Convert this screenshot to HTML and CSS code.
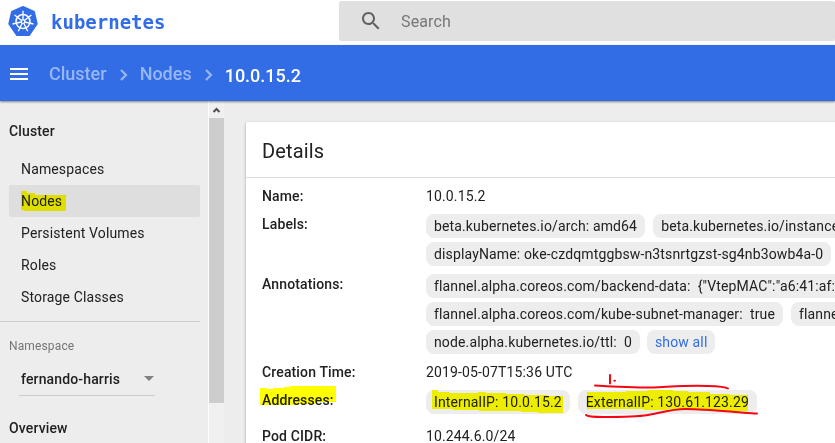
FILE: index.html
```html
<!DOCTYPE html>
<html lang="en">
<head>
<meta charset="utf-8">
<title>Kubernetes Dashboard</title>
<link rel="stylesheet" href="styles.css">
</head>
<body>
<header class="top">
  <svg class="logo" width="30" height="30" viewBox="0 0 30 30">
    <path d="M15 .8 26.2 5.800 29 17.800 21.300 29.200H8.700L1 17.800 3.800 5.800Z" fill="#326de6" stroke="#326de6" stroke-width="1.500" stroke-linejoin="round"/>
    <g fill="none" stroke="#fff" stroke-width="1.500">
      <circle cx="15" cy="15.600" r="7"/>
      <circle cx="15" cy="15.600" r="1.800" stroke-width="1.200"/>
      <path stroke-width="1.300" d="M15 13.800V4.800M16.400 14.500 23.400 8.900M16.700 16 25.500 18M15.800 17.200 19.700 25.300M14.200 17.200 10.300 25.300M13.300 16 4.500 18M13.600 14.500 6.600 8.900"/>
    </g>
  </svg>
  <span class="wordmark">kubernetes</span>
  <div class="search">
    <svg width="24" height="24" viewBox="0 0 24 24"><path fill="#616161" d="M15.500 14h-.79l-.28-.27C15.410 12.590 16 11.110 16 9.500 16 5.910 13.090 3 9.500 3S3 5.910 3 9.500 5.910 16 9.500 16c1.610 0 3.090-.59 4.230-1.570l.27.28v.79l5 4.990L20.490 19l-4.990-5zm-6 0C7.010 14 5 11.990 5 9.500S7.010 5 9.500 5 14 7.010 14 9.500 11.990 14 9.500 14z"/></svg>
    <span>Search</span>
  </div>
</header>
<nav class="bar">
  <svg class="menu" width="18" height="12" viewBox="0 0 18 12"><path fill="#fff" d="M0 0h18v2H0zM0 5h18v2H0zM0 10h18v2H0z"/></svg>
  <span class="crumb">Cluster</span>
  <svg class="chev" width="8" height="12" viewBox="0 0 8 12"><path d="M1 1l5 5-5 5" fill="none" stroke="#98b6f2" stroke-width="2.200"/></svg>
  <span class="crumb">Nodes</span>
  <svg class="chev" width="8" height="12" viewBox="0 0 8 12"><path d="M1 1l5 5-5 5" fill="none" stroke="#98b6f2" stroke-width="2.200"/></svg>
  <span class="crumb current">10.0.15.2</span>
</nav>
<div class="body">
  <aside class="side">
    <div class="group">Cluster</div>
    <a class="item">Namespaces</a>
    <a class="item active">Nodes</a>
    <a class="item">Persistent Volumes</a>
    <a class="item">Roles</a>
    <a class="item">Storage Classes</a>
    <div class="rule"></div>
    <div class="label">Namespace</div>
    <div class="select"><span>fernando-harris</span><i class="arrow"></i></div>
    <div class="group overview">Overview</div>
  </aside>
  <div class="scroll">
    <svg width="15" height="17" viewBox="0 0 15 17"><path d="M4.500 11 7.500 8l3 3" fill="none" stroke="#505050" stroke-width="2"/></svg>
    <div class="thumb"></div>
  </div>
  <main class="content">
    <section class="card">
      <h2>Details</h2>
      <dl>
        <dt>Name:</dt><dd>10.0.15.2</dd>
        <dt>Labels:</dt>
        <dd class="chips">
          <div><span class="chip">beta.kubernetes.io/arch: amd64</span><span class="chip">beta.kubernetes.io/instance</span></div>
          <div><span class="chip">displayName: oke-czdqmtggbsw-n3tsnrtgzst-sg4nb3owb4a-0</span></div>
        </dd>
        <dt>Annotations:</dt>
        <dd class="chips">
          <div><span class="chip">flannel.alpha.coreos.com/backend-data: &nbsp;{"VtepMAC":"a6:41:af:</span></div>
          <div><span class="chip">flannel.alpha.coreos.com/kube-subnet-manager: &nbsp;true</span><span class="chip">flannel</span></div>
          <div class="tight"><span class="chip">node.alpha.kubernetes.io/ttl: &nbsp;0</span><span class="chip link">show all</span></div>
        </dd>
        <dt>Creation Time:</dt><dd>2019-05-07T15:36 UTC</dd>
        <dt>Addresses:</dt>
        <dd class="chips addresses">
          <div><span class="chip">InternalIP: 10.0.15.2</span><span class="chip">ExternalIP: 130.61.123.29</span></div>
        </dd>
        <dt>Pod CIDR:</dt><dd>10.244.6.0/24</dd>
      </dl>
    </section>
  </main>
</div>
<svg class="marker" width="835" height="443" viewBox="0 0 835 443">
  <g fill="#ff0" shape-rendering="crispEdges">
    <path d="M21 191h6v2h8v2h31v16H24v-1h-3z"/>
    <path d="M260 388h7v1h6v-1h11v-1h6v-1h46v16h-21v2h-17v1h-38z"/>
    <path d="M432 390h6v2h11v1h29v-1h8v1h20v1h18v1h23v1h16v17h-25v-1h-17v-1h-42v-1h-26v-1h-21z"/>
    <path d="M587 392h39v-1h21v-1h26v1h15v1h22v2h20v1h18v16h-23v-1h-19v-1h-39v1h-23v-1h-57z"/>
  </g>
</svg>
<svg class="pen" width="835" height="443" viewBox="0 0 835 443">
  <path d="M610 375v8.500M614.300 380.700h.6M595 385.500c17 1 39 2 58 2 21-1 38-2.500 54-1.500 10 .3 18 .5 21 2.500M586 415c2 2 9 2 17 2 17 0 32 0 45-2 13-2 22-6 38-6s37 2 49 3c8 .5 15 1.500 22 1.500" fill="none" stroke="#f50613" stroke-width="2" stroke-linecap="round"/>
</svg>
</body>
</html>
```

FILE: styles.css
```css
* { box-sizing: border-box; }
body {
  margin: 0;
  width: 835px;
  height: 443px;
  overflow: hidden;
  display: flex;
  flex-direction: column;
  background: #ededed;
  color: #212121;
  font: 14px/20px Roboto, sans-serif;
  letter-spacing: .01em;
}
svg { flex: none; }
.top { height: 45px; flex: none; display: flex; background: #fff; }
.logo { margin: 6px 0 0 8px; }
.wordmark {
  width: 301px;
  flex: none;
  padding: 11px 0 0 13px;
  font: bold 19px/22px "DejaVu Sans Mono", monospace;
  letter-spacing: 0;
  color: #326de6;
}
.search {
  flex: 1;
  height: 40px;
  margin-top: 1px;
  padding-left: 20px;
  display: flex;
  align-items: center;
  background: #e0e0e0;
  border-radius: 2px;
  color: #777;
  font-size: 16px;
}
.search span { margin: 2px 0 0 18px; }
.bar {
  height: 56px;
  flex: none;
  padding: 2px 0 0 10px;
  display: flex;
  align-items: center;
  background: #326de6;
  box-shadow: 0 1px 2px rgba(0, 0, 0, .45);
  z-index: 1;
}
.menu { margin-right: 21px; }
.crumb { font-size: 18px; font-weight: 500; letter-spacing: 0; color: #98b6f2; }
.chev { margin: 2px 12px 0 13px; }
.current { color: #fff; margin-top: 3px; }
.body { flex: 1; min-height: 0; display: flex; overflow: hidden; }
.side { width: 209px; flex: none; border-right: 1px solid #fff; padding-top: 20px; }
.group { padding-left: 9px; margin-bottom: 12px; font-weight: 500; }
.item {
  display: block;
  height: 32px;
  margin: 0 8px 0 9px;
  padding: 6px 0 0 12px;
  border-radius: 2px;
}
.active { background: #dedede; }
.rule { width: 200px; height: 1px; margin-top: 8px; background: #ccc; }
.label { margin: 14px 0 0 9px; font-size: 12px; color: #757575; }
.select {
  width: 136px;
  height: 30px;
  margin: 10px 0 0 19px;
  padding: 0 1px 4px 2px;
  display: flex;
  align-items: center;
  justify-content: space-between;
  border-bottom: 1px solid #ccc;
  font-weight: 500;
}
.arrow { border: 5px solid transparent; border-top-color: #808080; border-bottom: 0; margin-top: -1px; }
.overview { margin-top: 22px; }
.scroll { width: 15px; flex: none; background: #f0f0f0; }
.scroll svg { display: block; }
.thumb { height: 285px; background: #cdcdcd; }
.content { flex: 1; min-width: 0; padding: 21px 0 0 22px; }
.card {
  height: 360px;
  background: #fff;
  border-radius: 2px 0 0 2px;
  box-shadow: 0 1px 3px rgba(0, 0, 0, .35);
}
h2 { margin: 0; height: 56px; padding: 15px 16px; font-size: 20px; line-height: 28px; font-weight: 400; border-bottom: 1px solid #ddd; }
dl { margin: 0; padding: 8px 0 8px 16px; display: grid; grid-template-columns: 164px minmax(0, 1fr); row-gap: 8px; }
dt { font-weight: 500; }
dd { margin: 0; white-space: nowrap; }
.chips { display: grid; row-gap: 4px; overflow: hidden; }
.chips div { display: flex; gap: 8px; }
.chips .tight { gap: 7px; }
.addresses { padding-bottom: 4px; }
.chip { flex: none; height: 24px; padding: 2px 8px; border-radius: 8px; background: #ededed; }
.link { color: #326de6; }
.marker, .pen { position: absolute; top: 0; left: 0; z-index: 2; pointer-events: none; }
.marker { mix-blend-mode: multiply; }
```
